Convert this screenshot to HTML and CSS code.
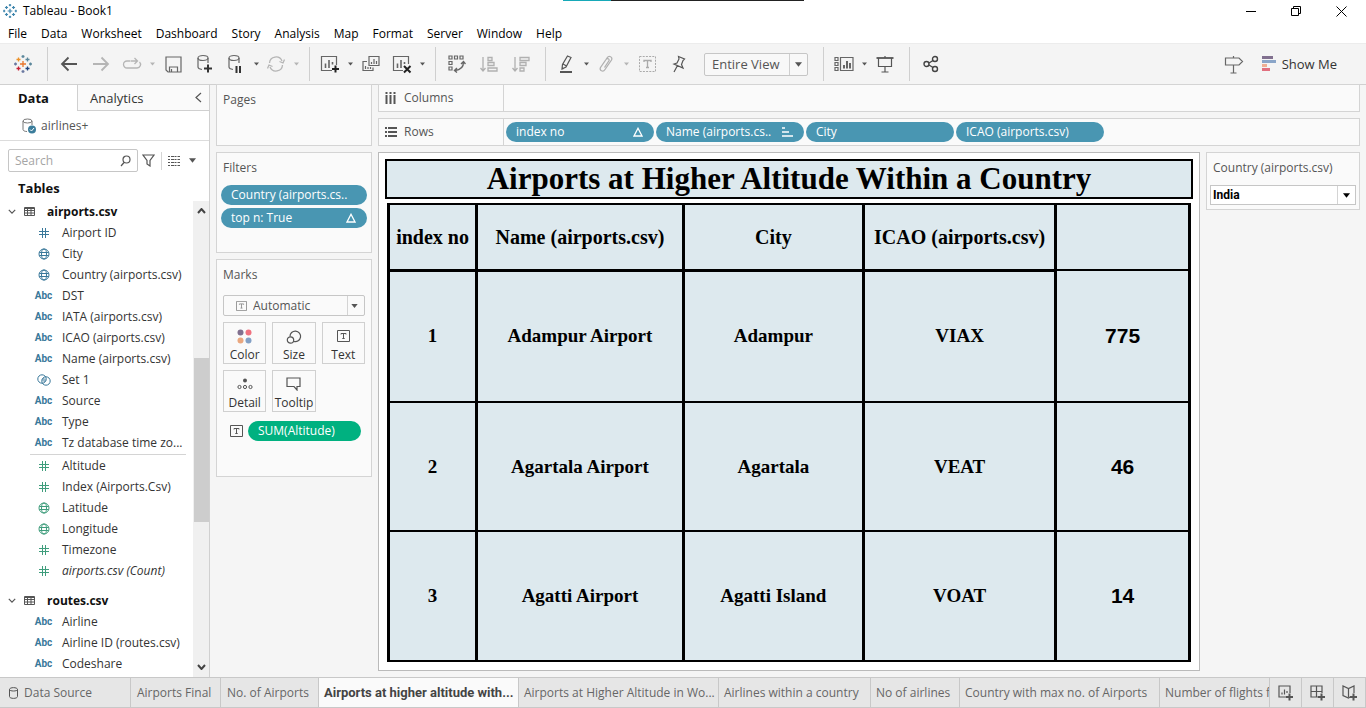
FILE: index.html
```html
<!DOCTYPE html>
<html lang="en">
<head>
<meta charset="utf-8">
<title>Tableau - Book1</title>
<link rel="stylesheet" href="styles.css">
</head>
<body>
<svg class="defs" aria-hidden="true">
  <symbol id="hash" viewBox="0 0 12 12"><path d="M4.500 1v10M7.500 1v10M1 4.500h10M1 7.500h10" fill="none" stroke="currentColor"/></symbol>
  <symbol id="globe" viewBox="0 0 12 12"><g fill="none" stroke="currentColor"><circle cx="6" cy="6" r="5"/><ellipse cx="6" cy="6" rx="2.500" ry="5"/><path d="M1.300 4.500h9.400M1.300 7.500h9.400"/></g></symbol>
  <symbol id="set" viewBox="0 0 14 12"><circle cx="5" cy="5" r="4.200" fill="none" stroke="currentColor"/><circle cx="9" cy="7" r="4.200" fill="none" stroke="currentColor"/><path d="M5.600 4.700L8.400 7.300" stroke="currentColor" stroke-width="3" opacity=".5"/></symbol>
  <symbol id="table" viewBox="0 0 11 11"><path d="M.5 1.500h10v8H.5zM.5 2.500h10M.5 4.500h10M.5 7h10M3.500 3v6.500M7 3v6.500" fill="none" stroke="currentColor"/></symbol>
  <symbol id="caret" viewBox="0 0 8 5"><path d="M0 0h8L4 5z" fill="currentColor"/></symbol>
  <symbol id="chev-down" viewBox="0 0 10 6"><path d="M1 1l4 4 4-4" fill="none" stroke="currentColor" stroke-width="1.500"/></symbol>
  <symbol id="tee" viewBox="0 0 13 12"><path d="M.5.500h12v11H.500zM4 4.500V3.500h5v1M6.500 3.500v5M5.300 8.500h2.400" fill="none" stroke="currentColor"/></symbol>
  <symbol id="delta" viewBox="0 0 10 10"><path d="M5 1.300L9 9H1z" fill="none" stroke="currentColor" stroke-width="1.300"/></symbol>
  <symbol id="plusses" viewBox="0 0 18 18">
    <path class="l1" d="M9 6v6M6 9h6"/><path class="l2" d="M4.500 2.500v4M2.500 4.500h4"/><path class="l3" d="M13.500 2.500v4M11.500 4.500h4"/><path class="l4" d="M4.500 11.500v4M2.500 13.500h4"/><path class="l5" d="M13.500 11.500v4M11.500 13.500h4"/><path class="l3" d="M9 0v3M7.500 1.500h3M16.500 7.500v3M15 9h3"/><path class="l6" d="M1.500 7.500v3M0 9h3M9 15v3M7.500 16.500h3"/>
  </symbol>
</svg>

<header class="titlebar">
  <span class="progress"></span>
  <svg class="app-icon mono" width="14" height="14"><use href="#plusses"/></svg>
  <h1 class="app-title">Tableau - Book1</h1>
  <div class="window-buttons">
    <button aria-label="Minimize"><svg width="11" height="11"><path d="M0 5.500h10" stroke="#000"/></svg></button>
    <button aria-label="Restore"><svg width="11" height="11"><path d="M.5 2.500h7v7h-7zM2.500 2.500v-2h7v7h-2" fill="none" stroke="#000"/></svg></button>
    <button aria-label="Close"><svg width="11" height="11"><path d="M.5.500l10 10M10.500.500l-10 10" stroke="#000"/></svg></button>
  </div>
</header>

<nav class="menubar" aria-label="Main menu">
  <button>File</button><button>Data</button><button>Worksheet</button><button>Dashboard</button><button>Story</button><button>Analysis</button><button>Map</button><button>Format</button><button>Server</button><button>Window</button><button>Help</button>
</nav>

<div class="toolbar" role="toolbar" aria-label="Tools">
  <div class="tool-group brand"><button class="tool" aria-label="Start page"><svg class="tint" width="18" height="18"><use href="#plusses"/></svg></button></div>
  <div class="tool-group">
    <button class="tool" aria-label="Back"><svg width="18" height="16" fill="none" stroke="#555" stroke-width="1.800"><path d="M2 8h15M8.500 1.500L2 8l6.500 6.500"/></svg></button>
    <button class="tool" aria-label="Forward"><svg width="18" height="16" fill="none" stroke="#b5b5b5" stroke-width="1.800"><path d="M1 8h15M9.500 1.500L16 8l-6.500 6.500"/></svg></button>
    <button class="tool split" aria-label="Redo"><svg width="20" height="14" fill="none" stroke="#b5b5b5" stroke-width="1.300"><path d="M8.500 4H5a3.500 3.500 0 000 7h10a3.500 3.500 0 002.500-6M9 4h6.500M12.500 1l3 3-3 3"/></svg></button><button class="drop off" aria-label="Redo options"><svg width="5" height="4"><use href="#caret"/></svg></button>
    <button class="tool" aria-label="Save"><svg width="17" height="17" fill="none" stroke="#666" stroke-width="1.200"><path d="M1 1h15v15H3l-2-2zM4.500 16v-5h8v5M6.500 13v3"/></svg></button>
    <button class="tool" aria-label="New data source"><svg width="18" height="20" fill="none" stroke="#666" stroke-width="1.200"><ellipse cx="7" cy="4" rx="5" ry="2.500"/><path d="M2 4v9c0 1 1 2 4 2.500M12 4v5"/><path d="M12 10.500v8M8 14.500h8" stroke="#333" stroke-width="2"/></svg></button>
    <button class="tool split" aria-label="Pause updates"><svg width="18" height="20" fill="none" stroke="#666" stroke-width="1.200"><ellipse cx="7" cy="4" rx="5" ry="2.500"/><path d="M2 4v9c0 1 1 2 4 2.500M12 4v5"/><path d="M9.500 12v7M13 12v7" stroke="#333" stroke-width="2"/></svg></button><button class="drop" aria-label="Pause options"><svg width="5" height="4"><use href="#caret"/></svg></button>
    <button class="tool split" aria-label="Refresh"><svg width="18" height="18" fill="none" stroke="#b5b5b5" stroke-width="1.300"><path d="M2.500 8A6.500 6.500 0 0115 6M15.500 10A6.500 6.500 0 013 12M12.500 6.500L16 8l1.500-3.500M5.500 11.500L2 10 .5 13.500"/></svg></button><button class="drop off" aria-label="Refresh options"><svg width="5" height="4"><use href="#caret"/></svg></button>
  </div>
  <div class="tool-group">
    <button class="tool split" aria-label="New worksheet"><svg width="20" height="20" fill="none" stroke="#666" stroke-width="1.200"><path d="M12 16.500H1.500v-14h15V11"/><path d="M5.500 14V9.500M9 14V6M12.500 10.500V8" stroke-width="1.600"/><path d="M15.500 11.500v7M12 15h7" stroke="#222" stroke-width="2"/></svg></button><button class="drop" aria-label="New worksheet options"><svg width="5" height="4"><use href="#caret"/></svg></button>
    <button class="tool" aria-label="Duplicate"><svg width="18" height="18" fill="none" stroke="#666" stroke-width="1.200"><path d="M7 1.500h10v9H7zM5 6.500H1v9h10v-3"/><path d="M9.500 9V7M12 9V4M14.500 9V6M3.500 14v-3M6 14v-2M8.500 14v-2"/></svg></button>
    <button class="tool split" aria-label="Clear sheet"><svg width="20" height="20" fill="none" stroke="#666" stroke-width="1.200"><path d="M11 16.500H1.500v-14h15V10"/><path d="M5.500 14V9.500M9 14V6M12.500 10V8" stroke-width="1.600"/><path d="M12 12l6.500 6.500M18.500 12L12 18.500" stroke="#222" stroke-width="2"/></svg></button><button class="drop" aria-label="Clear options"><svg width="5" height="4"><use href="#caret"/></svg></button>
  </div>
  <div class="tool-group">
    <button class="tool" aria-label="Swap rows and columns"><svg width="18" height="18" fill="none" stroke="#666" stroke-width="1.200"><path d="M1 1h3v3H1zM6.500 1h3v3h-3zM12 1h3v3h-3zM1 6.500h3v3H1zM1 12h3v3H1z"/><path d="M15.500 7c0 5-3 8-8.500 8.500M13 9l2.500-2.500L17.500 9M9 13l-2.500 2.500L9 17.500" stroke-width="1.400"/></svg></button>
    <button class="tool" aria-label="Sort ascending"><svg width="18" height="17" fill="none" stroke="#b0b0b0" stroke-width="1.300"><path d="M3 1v14M.5 12L3 15l2.500-3M8 1.500h4v3H8zM8 6.500h6v3H8zM8 12h9v3H8z"/></svg></button>
    <button class="tool" aria-label="Sort descending"><svg width="18" height="17" fill="none" stroke="#b0b0b0" stroke-width="1.300"><path d="M3 1v14M.5 12L3 15l2.500-3M8 1.500h9v3H8zM8 6.500h6v3H8zM8 12h4v3H8z"/></svg></button>
  </div>
  <div class="tool-group fit-group">
    <button class="tool split" aria-label="Highlight"><svg width="16" height="20" fill="none" stroke="#555" stroke-width="1.200"><path d="M9.500 2L13 3.500 8 13l-4 2 .5-4.500zM5 10l3.500 2M4 13.500l1.500 1.500"/><path d="M2 18h12" stroke-width="2"/></svg></button><button class="drop" aria-label="Highlight options"><svg width="5" height="4"><use href="#caret"/></svg></button>
    <button class="tool split" aria-label="Group members"><svg width="16" height="18" fill="none" stroke="#b0b0b0" stroke-width="1.300"><path d="M5 9l4-6c2-3 6-1 4.500 2L7 14.500c-2 3-6 1-4.500-2L8 4.500c1.200-2 4-.5 2.800 1.500L6.500 12.500"/></svg></button><button class="drop off" aria-label="Group options"><svg width="5" height="4"><use href="#caret"/></svg></button>
    <button class="tool" aria-label="Show mark labels"><svg width="17" height="16" fill="none" stroke="#aaa"><path d="M.5.500h16v15H.5z" stroke-dasharray="2 1.200"/><path d="M5 6V4.500h7V6M8.500 4.500v7M7 11.500h3" stroke-width="1.300"/></svg></button>
    <button class="tool" aria-label="Fix axes"><svg width="14" height="18" fill="none" stroke="#555" stroke-width="1.200"><path d="M6.500 1.500L12.500 4l-1.500 1.500-1.500 4L11 13 2 9l3-1 2-4zM5.500 10.500L2 17"/></svg></button>
    <span class="fit"><select aria-label="Fit"><option>Entire View</option></select><svg width="7" height="5"><use href="#caret"/></svg></span>
  </div>
  <div class="tool-group">
    <button class="tool split" aria-label="Show or hide cards"><svg width="20" height="16" fill="none" stroke="#666" stroke-width="1.200"><path d="M1 1.500h3v3H1zM1 6.500h3v3H1zM1 11.500h3v3H1zM6.500 1.500H19v13H6.500z"/><path d="M10 12.500V9M13 12.500V5M16 12.500V7" stroke-width="2"/></svg></button><button class="drop" aria-label="Card options"><svg width="5" height="4"><use href="#caret"/></svg></button>
    <button class="tool" aria-label="Presentation mode"><svg width="18" height="17" fill="none" stroke="#555" stroke-width="1.200"><path d="M2.500 2v8.500h13V2M9 10.500V16M5.500 16h7M9 0v2"/><path d="M.5 2h17" stroke-width="1.800"/></svg></button>
  </div>
  <div class="tool-group last">
    <button class="tool" aria-label="Share"><svg width="16" height="18" fill="none" stroke="#444" stroke-width="1.400"><circle cx="3.500" cy="9" r="2.500"/><circle cx="12" cy="4" r="2.500"/><circle cx="12" cy="14" r="2.500"/><path d="M6 8l4-2.500M6 10l4 2.500"/></svg></button>
  </div>
  <button class="tool guide" aria-label="Guide"><svg width="20" height="19" fill="none" stroke="#666" stroke-width="1.200"><path d="M1.500 3h13.500l3.500 3.500L15 10H1.500zM9.500 1v2M9.500 10v8M6.500 18h6"/></svg></button>
  <button class="show-me"><svg width="15" height="16"><path d="M0 0h11v3H0z" fill="#81708f"/><path d="M0 4h14v3H0z" fill="#8aa5c8"/><path d="M0 8h5v3H0z" fill="#eeaf94"/><path d="M0 12h8v3H0z" fill="#e1707f"/></svg>Show Me</button>
</div>

<main class="workspace">
  <aside class="data-pane">
    <div class="pane-tabs">
      <button class="pane-tab current">Data</button>
      <button class="pane-tab">Analytics</button>
      <button class="collapse" aria-label="Collapse"><svg width="7" height="11"><path d="M6 1L1 5.500 6 10" fill="none" stroke="#555" stroke-width="1.200"/></svg></button>
    </div>
    <div class="source"><svg width="14" height="16" fill="none" stroke="#777"><ellipse cx="5.500" cy="3" rx="4.500" ry="2"/><path d="M1 3v8.500c0 1 1.500 2 4 2M10 3v4"/><circle cx="10" cy="11.500" r="4" fill="#3b7d9b" stroke="none"/><path d="M8 11.500l1.500 1.500 2.500-3" stroke="#fff"/></svg><span>airlines+</span></div>
    <div class="search-row">
      <label class="search"><input type="text" placeholder="Search" aria-label="Search"><svg width="11" height="12" fill="none" stroke="#555" stroke-width="1.200"><circle cx="6.500" cy="4.500" r="3.500"/><path d="M4 7.500L1 11"/></svg></label>
      <button class="filter-btn" aria-label="Filter"><svg width="13" height="13" fill="none" stroke="#555" stroke-width="1.200"><path d="M1 1h11L8 6.500V12l-3-2V6.500z"/></svg></button>
      <button class="list-btn" aria-label="View options"><svg width="12" height="10" stroke="#555"><path d="M0 .5h12M0 3.500h12M0 6.500h12M0 9.500h12" stroke-dasharray="2 1 3 .5"/></svg><svg width="7" height="5"><use href="#caret"/></svg></button>
    </div>
    <h2 class="tables-title">Tables</h2>
    <div class="tree-wrap">
      <div class="tree">
        <h3 class="branch"><svg width="8" height="5"><use href="#chev-down"/></svg><svg width="11" height="11"><use href="#table"/></svg><span>airports.csv</span></h3>
        <ul class="fields dim">
          <li><i><svg width="12" height="12"><use href="#hash"/></svg></i>Airport ID</li>
          <li><i><svg width="12" height="12"><use href="#globe"/></svg></i>City</li>
          <li><i><svg width="12" height="12"><use href="#globe"/></svg></i>Country (airports.csv)</li>
          <li><i>Abc</i>DST</li>
          <li><i>Abc</i>IATA (airports.csv)</li>
          <li><i>Abc</i>ICAO (airports.csv)</li>
          <li><i>Abc</i>Name (airports.csv)</li>
          <li><i><svg width="14" height="12"><use href="#set"/></svg></i>Set 1</li>
          <li><i>Abc</i>Source</li>
          <li><i>Abc</i>Type</li>
          <li><i>Abc</i>Tz database time zo...</li>
        </ul>
        <ul class="fields measure">
          <li><i><svg width="12" height="12"><use href="#hash"/></svg></i>Altitude</li>
          <li><i><svg width="12" height="12"><use href="#hash"/></svg></i>Index (Airports.Csv)</li>
          <li><i><svg width="12" height="12"><use href="#globe"/></svg></i>Latitude</li>
          <li><i><svg width="12" height="12"><use href="#globe"/></svg></i>Longitude</li>
          <li><i><svg width="12" height="12"><use href="#hash"/></svg></i>Timezone</li>
          <li><i><svg width="12" height="12"><use href="#hash"/></svg></i><em>airports.csv (Count)</em></li>
        </ul>
        <h3 class="branch"><svg width="8" height="5"><use href="#chev-down"/></svg><svg width="11" height="11"><use href="#table"/></svg><span>routes.csv</span></h3>
        <ul class="fields dim">
          <li><i>Abc</i>Airline</li>
          <li><i>Abc</i>Airline ID (routes.csv)</li>
          <li><i>Abc</i>Codeshare</li>
        </ul>
      </div>
      <div class="scrollbar">
        <svg width="9" height="6"><path d="M1 5l3.500-4L8 5" fill="none" stroke="#444" stroke-width="2"/></svg>
        <div class="thumb"></div>
        <svg width="9" height="6"><path d="M1 1l3.500 4L8 1" fill="none" stroke="#444" stroke-width="2"/></svg>
      </div>
    </div>
  </aside>

  <section class="cards">
    <div class="card pages"><h2>Pages</h2></div>
    <div class="card filters"><h2>Filters</h2>
      <button class="pill">Country (airports.cs..</button>
      <button class="pill">top n: True<svg width="10" height="10"><use href="#delta"/></svg></button>
    </div>
    <div class="card marks"><h2>Marks</h2>
      <span class="mark-type"><svg class="lead" width="11" height="10"><use href="#tee"/></svg><select aria-label="Mark type"><option>Automatic</option></select><svg class="arrow" width="7" height="4"><use href="#caret"/></svg></span>
      <div class="mark-grid">
        <button><svg width="16" height="16"><circle cx="3.500" cy="3.500" r="3" fill="#81708f"/><circle cx="11.500" cy="3.500" r="3" fill="#f0717f"/><circle cx="3.500" cy="11.500" r="3" fill="#eaa77f"/><circle cx="11.500" cy="11.500" r="3" fill="#83a0c5"/></svg>Color</button>
        <button><svg width="16" height="16" fill="none" stroke="#555" stroke-width="1.200"><path d="M4 7.500A5.300 5.300 0 118 12.500"/><circle cx="4.500" cy="11" r="3.200"/></svg>Size</button>
        <button><svg width="13" height="14" color="#555"><use href="#tee"/></svg>Text</button>
        <button><svg width="16" height="14"><circle cx="8" cy="3.500" r="2" fill="#555"/><g fill="none" stroke="#555"><circle cx="2.500" cy="10" r="1.600"/><circle cx="8" cy="10" r="1.600"/><circle cx="13.500" cy="10" r="1.600"/></g></svg>Detail</button>
        <button><svg width="15" height="14" fill="none" stroke="#555" stroke-width="1.200"><path d="M1 1h13v8.500h-3V13L8 9.500H1z"/></svg>Tooltip</button>
      </div>
      <div class="encoding"><svg width="13" height="12"><use href="#tee"/></svg><button class="pill green">SUM(Altitude)</button></div>
    </div>
  </section>

  <section class="canvas">
    <div class="shelf"><h2><svg width="12" height="12"><path d="M1.500 0v2M1.500 3v9M5.500 0v2M5.500 3v9M9.500 0v2M9.500 3v9" stroke="#555" stroke-width="2"/></svg>Columns</h2><div class="drops"></div></div>
    <div class="shelf"><h2><svg width="12" height="12"><path d="M0 2h2M3 2h9M0 6h2M3 6h9M0 10h2M3 10h9" stroke="#555" stroke-width="2"/></svg>Rows</h2>
      <div class="drops">
        <button class="pill">index no<svg width="10" height="10"><use href="#delta"/></svg></button>
        <button class="pill">Name (airports.cs..<svg width="11" height="10"><path d="M0 1h3M0 5h7M0 9h11" stroke="#fff" stroke-width="1.500"/></svg></button>
        <button class="pill">City</button>
        <button class="pill">ICAO (airports.csv)</button>
      </div>
    </div>
    <div class="stage">
      <div class="view">
        <h2 class="view-title">Airports at Higher Altitude Within a Country</h2>
        <div class="grid-holder">
        <table class="crosstab">
          <colgroup><col class="c-index"><col class="c-name"><col class="c-city"><col class="c-icao"><col class="c-value"></colgroup>
          <thead><tr><th>index no</th><th>Name (airports.csv)</th><th>City</th><th>ICAO (airports.csv)</th><th class="blank"></th></tr></thead>
          <tbody>
            <tr><td>1</td><td>Adampur Airport</td><td>Adampur</td><td>VIAX</td><td class="value">775</td></tr>
            <tr><td>2</td><td>Agartala Airport</td><td>Agartala</td><td>VEAT</td><td class="value">46</td></tr>
            <tr><td>3</td><td>Agatti Airport</td><td>Agatti Island</td><td>VOAT</td><td class="value">14</td></tr>
          </tbody>
        </table>
        </div>
      </div>
      <div class="quick-filter"><label for="country">Country (airports.csv)</label>
        <span class="country"><select id="country"><option>India</option></select><svg width="7" height="5"><use href="#caret"/></svg></span>
      </div>
    </div>
  </section>
</main>

<footer class="sheets">
  <button class="sheet s-source"><svg width="9" height="12" fill="none" stroke="#555"><path d="M.5 2.500v7c0 2.500 8 2.500 8 0v-7c0-2.500-8-2.500-8 0c0 2 8 2 8 0"/></svg>Data Source</button>
  <button class="sheet s-final">Airports Final</button>
  <button class="sheet s-count">No. of Airports</button>
  <button class="sheet s-long active">Airports at higher altitude with...</button>
  <button class="sheet s-long">Airports at Higher Altitude in Wo...</button>
  <button class="sheet s-mid">Airlines within a country</button>
  <button class="sheet s-short">No of airlines</button>
  <button class="sheet s-long">Country with max no. of Airports</button>
  <button class="sheet s-rest">Number of flights fr</button>
  <button class="sheet s-new" aria-label="New worksheet"><svg width="16" height="16" fill="none" stroke="#555" stroke-width="1.200"><path d="M8 12H1V1h11v7M4 9.500V7.500M6.500 9.500V4.500M9 8V6"/><path d="M11.500 8.500v7M8 12h7" stroke-width="2"/></svg></button>
  <button class="sheet s-new" aria-label="New dashboard"><svg width="16" height="16" fill="none" stroke="#555" stroke-width="1.200"><path d="M8 12H1V1h11v7M6.500 1v11M1 6.500h11"/><path d="M11.500 8.500v7M8 12h7" stroke-width="2"/></svg></button>
  <button class="sheet s-new" aria-label="New story"><svg width="16" height="16" fill="none" stroke="#555" stroke-width="1.200"><path d="M8 12l-1.500 1L1 10.500V1l5.500 2.500L12 1v7M6.500 3.500V12"/><path d="M11.500 8.500v7M8 12h7" stroke-width="2"/></svg></button>
</footer>
</body>
</html>
```
FILE: styles.css
```css
* { box-sizing: border-box; }
html, body { height: 100%; }
body {
  margin: 0;
  display: flex;
  flex-direction: column;
  background: #f5f5f5;
  color: #333;
  font: 12px/16px "Open Sans", "Noto Sans", sans-serif;
  overflow: hidden;
}
button, input, select { font: inherit; color: inherit; margin: 0; padding: 0; border: 0; background: none; }
button { display: flex; align-items: center; white-space: nowrap; }
select { appearance: none; }
h1, h2, h3, ul { margin: 0; padding: 0; font: inherit; }
ul { list-style: none; }
svg { display: block; flex: none; }
.defs { position: absolute; width: 0; height: 0; }

/* Logo colours: one blue in the title bar, seven tints in the toolbar */
.l1 { stroke: var(--logo-1, #3f86ad); }
.l2 { stroke: var(--logo-2, #3f86ad); }
.l3 { stroke: var(--logo-3, #3f86ad); }
.l4 { stroke: var(--logo-4, #3f86ad); }
.l5 { stroke: var(--logo-5, #3f86ad); }
.l6 { stroke: var(--logo-6, #3f86ad); }
.mono { stroke-width: 1.6; }
.tint {
  stroke-width: 1.3;
  --logo-1: #e8762c;
  --logo-2: #eb9129;
  --logo-3: #5b879b;
  --logo-4: #c72037;
  --logo-5: #1f447e;
  --logo-6: #6a78a0;
}

/* Title bar and menu */
.titlebar { position: relative; display: flex; align-items: center; height: 22px; flex: none; padding: 0 2px 0 3px; background: #fff; color: #000; }
.progress { position: absolute; top: 0; left: 563px; width: 241px; height: 1px; background: linear-gradient(90deg, #17a9b8 20%, #222 20%); }
.app-icon { margin-right: 6px; }
.app-title { flex: 1; }
.window-buttons { display: flex; }
.window-buttons button { width: 45px; height: 20px; justify-content: center; }
.menubar { display: flex; height: 21px; flex: none; padding: 2px 0 0 1px; background: #fff; color: #000; }
.menubar button { padding: 0 7px; }

/* Toolbar */
.toolbar { display: flex; align-items: center; height: 42px; flex: none; background: #f4f4f4; border-top: 1px solid #ececec; border-bottom: 1px solid #d0d0d0; }
.tool-group { display: flex; align-items: center; height: 34px; padding: 0 8px 0 5px; border-right: 1px solid #cfcfcf; }
.tool-group.brand { padding: 0 8px 0 7px; }
.tool-group.last { border: 0; }
.tool-group.fit-group { padding-right: 15px; }
.tool { width: 32px; height: 32px; justify-content: center; }
.tool.split { width: 30px; }
.drop { width: 10px; height: 32px; justify-content: center; color: #555; }
.drop.off { color: #b5b5b5; }
.fit { display: flex; align-items: center; position: relative; width: 104px; height: 23px; margin-left: 9px; border: 1px solid #c6c6c6; border-radius: 2px; background: linear-gradient(90deg, #f8f8f8 84px, #cfcfcf 84px, #cfcfcf 85px, #f8f8f8 85px); font-size: 13px; color: #555; }
.fit select { width: 100%; padding-left: 7px; }
.fit svg { position: absolute; right: 5px; pointer-events: none; }
.guide { margin-left: auto; }
.show-me { gap: 5px; margin: 0 29px 0 12px; font-size: 13px; }

/* Data pane */
.workspace { flex: 1; display: flex; min-height: 0; }
.data-pane { display: flex; flex-direction: column; width: 210px; flex: none; background: #fff; border-right: 1px solid #d0d0d0; }
.pane-tabs { display: flex; height: 26px; flex: none; font-size: 13px; }
.pane-tab { padding-left: 12px; background: #fafafa; border: solid #d0d0d0; border-width: 0 0 1px 1px; flex: 1; }
.pane-tab.current { flex: 0 0 77px; padding-left: 18px; background: #fff; border: 0; font-weight: 700; color: #111; }
.collapse { width: 14px; background: #fafafa; border-bottom: 1px solid #d0d0d0; }
.source { display: flex; align-items: center; gap: 5px; height: 30px; flex: none; padding-left: 22px; border-bottom: 1px solid #dcdcdc; color: #555; }
.search-row { display: flex; align-items: center; height: 23px; flex: none; margin: 8px 0 7px 8px; }
.search { display: flex; align-items: center; width: 130px; height: 23px; padding: 0 6px; border: 1px solid #c6c6c6; border-radius: 2px; }
.search input { flex: 1; min-width: 0; outline: 0; }
.search input::placeholder { color: #a5a5a5; }
.filter-btn { width: 24px; height: 18px; padding-left: 4px; border-right: 1px solid #d4d4d4; }
.list-btn { gap: 9px; padding-left: 6px; color: #555; }
.tables-title { height: 22px; flex: none; padding-left: 18px; font-size: 13px; line-height: 18px; font-weight: 700; color: #111; }
.tree-wrap { flex: 1; display: flex; min-height: 0; }
.tree { flex: 1; min-width: 0; overflow: hidden; }
.branch { display: flex; align-items: center; height: 21px; padding-left: 8px; gap: 8px; color: #555; }
.branch span { margin-left: 4px; font-weight: 700; color: #111; }
.fields + .branch { margin-top: 9px; }
.fields li { display: flex; align-items: center; height: 21px; padding-left: 33px; white-space: nowrap; }
.fields i { display: flex; justify-content: center; width: 21px; margin-right: 8px; font: bold 10px/12px "Roboto", sans-serif; }
.dim i { color: #39789a; }
.measure { margin: 1px 7px 0 30px; border-top: 1px solid #d4d4d4; }
.fields.measure li { padding-left: 3px; }
.measure i { color: #3f9d7c; }
.scrollbar { display: flex; flex-direction: column; align-items: center; width: 16px; padding: 7px 0; background: #f0f0f0; }
.thumb { width: 15px; flex: 0 0 164px; margin: 144px 0 auto; background: #cdcdcd; }

/* Cards */
.cards { display: flex; flex-direction: column; gap: 6px; width: 156px; flex: none; margin: -1px 6px 0; color: #333; }
.card { background: #fafafa; border: 1px solid #d4d4d4; padding: 7px 4px; }
.card h2 { padding-left: 2px; color: #555; }
.pages { height: 62px; }
.filters { height: 101px; }
.filters h2 { margin-bottom: 9px; }
.filters .pill { width: 100%; margin-bottom: 3px; }
.marks { height: 218px; }
.pill { height: 20px; padding: 0 11px 0 10px; border-radius: 10px; background: #4996b2; color: #fff; justify-content: space-between; }
.pill.green { flex: 1; background: #00b180; }
.mark-type { position: relative; display: flex; align-items: center; height: 21px; margin: 12px 2px 6px; border: 1px solid #c6c6c6; border-radius: 2px; color: #555; background: linear-gradient(90deg, #fafafa 123px, #d4d4d4 123px, #d4d4d4 124px, #fafafa 124px); }
.mark-type .lead { position: absolute; left: 12px; color: #888; }
.mark-type .arrow { position: absolute; right: 6px; pointer-events: none; }
.mark-type select { width: 100%; padding-left: 29px; }
.mark-grid { display: grid; grid-template-columns: repeat(3, 1fr); gap: 6px; margin: 0 2px; }
.mark-grid button { flex-direction: column; justify-content: space-between; height: 42px; padding: 6px 0 0; border: 1px solid #d0d0d0; }
.encoding { display: flex; align-items: center; gap: 5px; margin: 9px 6px 0 9px; color: #555; }

/* Shelves */
.canvas { flex: 1; display: flex; flex-direction: column; gap: 6px; min-width: 0; margin-top: -1px; padding: 0 6px 6px 0; }
.shelf { display: flex; height: 28px; flex: none; background: #fafafa; border: 1px solid #d4d4d4; }
.shelf h2 { display: flex; align-items: center; gap: 7px; width: 125px; padding-left: 6px; border-right: 1px solid #d4d4d4; color: #555; }
.drops { flex: 1; display: flex; align-items: center; gap: 2px; padding-left: 2px; }
.drops .pill { width: 148px; }

/* View */
.stage { flex: 1; display: flex; gap: 6px; min-height: 0; }
.view { flex: 1; display: flex; flex-direction: column; min-width: 0; padding: 6px 6px 8px; background: #fff; border: 1px solid #bababa; }
.view-title { height: 40px; flex: none; border: 2px solid #000; background: #dde9ee; color: #000; text-align: center; font: bold 31px/36px "Liberation Serif", serif; }
.grid-holder { flex: 1; min-height: 0; margin: 4px 2px 0; }
.crosstab { width: 100%; height: 100%; table-layout: fixed; border-collapse: collapse; background: #dde9ee; color: #000; font: bold 19px/24px "Liberation Serif", serif; }
.crosstab th, .crosstab td { padding: 0; border: solid #000; border-width: 2px 3px; text-align: center; }
.crosstab thead th { height: 66px; border-bottom-width: 3px; font-size: 20px; white-space: nowrap; }
.crosstab thead .blank { border-bottom-width: 2px; }
.c-index { width: 11%; }
.c-name { width: 25.8%; }
.c-city { width: 22.5%; }
.c-icao { width: 24%; }
.crosstab .value { font: bold 21px/24px "Liberation Sans", sans-serif; }
.quick-filter { width: 154px; height: 58px; padding: 7px 3px 3px; background: #fafafa; border: 1px solid #d4d4d4; color: #555; }
.quick-filter label { display: block; margin: 0 0 9px 3px; }
.country { position: relative; display: flex; align-items: center; height: 20px; border: 1px solid #c6c6c6; background: linear-gradient(90deg, #fff 126px, #d4d4d4 126px, #d4d4d4 127px, #fff 127px); color: #000; }
.country select { width: 100%; padding-left: 2px; font: bold 12px/16px "Roboto", sans-serif; }
.country svg { position: absolute; right: 5px; pointer-events: none; }

/* Sheet tabs */
.sheets { display: flex; height: 31px; flex: none; background: #e6e6e6; border: solid #c8c8c8; border-width: 1px 0; color: #666; }
.sheet { padding-left: 5px; border-right: 1px solid #c8c8c8; overflow: hidden; }
.sheet.active { background: #fafafa; font: bold 13px/16px "Roboto", sans-serif; color: #444; }
.s-source { width: 131px; padding-left: 9px; gap: 6px; }
.s-final { width: 90px; padding-left: 6px; }
.s-count { width: 98px; padding-left: 6px; }
.s-long { width: 200px; }
.s-mid { width: 152px; }
.s-short { width: 89px; }
.s-rest { flex: 1; min-width: 0; }
.s-new { width: 32px; padding: 0; justify-content: center; }
```
